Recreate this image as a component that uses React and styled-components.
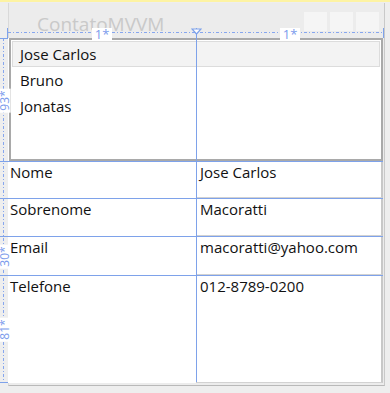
import React from 'react'
import styled, { createGlobalStyle } from 'styled-components'

const GlobalStyle = createGlobalStyle`
  html, body {
    margin: 0;
    padding: 0;
    background: #eeeeee;
  }
  body {
    font-family: "Open Sans", "Noto Sans", sans-serif;
    color: #111111;
  }
`

const blue = '#7ea2ea'
const dotColor = '#86a6ee'

const Surface = styled.div`
  position: relative;
  width: 390px;
  height: 393px;
  overflow: hidden;
  background: #eeeeee;
`

const TopStrip = styled.div`
  height: 2px;
  background: #fdf3a3;
`

const Frame = styled.div`
  margin: 1px 0 0 8px;
  width: 377px;
  height: 383px;
  background: #ececec;
  border-right: 1px solid #c9c9c9;
  border-bottom: 1px solid #b9b9b9;
  border-left: 1px solid #d9d9d9;
  box-sizing: border-box;
  display: flex;
  flex-direction: column;
`

const TitleBar = styled.div`
  height: 35px;
  flex: none;
  display: flex;
  align-items: flex-start;
  padding: 0 5px 0 28px;
`

const Title = styled.div`
  margin-top: 8px;
  font-size: 19px;
  line-height: 26px;
  color: #c9c9c9;
`

const Controls = styled.div`
  margin-left: auto;
  margin-top: 9px;
  display: flex;
  gap: 3px;
`

const CtrlBox = styled.div`
  width: 23px;
  height: 19px;
  background: #f5f5f5;
`

const Client = styled.div`
  width: 375px;
  height: 345px;
  margin-left: -1px;
  background: #ffffff;
  display: grid;
  grid-template-columns: 188px 1fr;
  grid-template-rows: 123px 37px 38px 39px 1fr;
`

const ListBox = styled.div`
  grid-column: 1 / 3;
  margin-left: 1px;
  border: 2px solid #a9a9a9;
  padding: 1px;
  background: #ffffff;
`

const ListItem = styled.div`
  height: 26px;
  box-sizing: border-box;
  padding: 2px 7px;
  font-size: 15px;
  line-height: 20px;
  background: ${p => (p.$selected ? '#f3f3f3' : 'transparent')};
  border: 1px solid ${p => (p.$selected ? '#dcdcdc' : 'transparent')};
`

const FieldLabel = styled.div`
  padding: 1px 2px 0;
  font-size: 15px;
  line-height: 20px;
`

const TextBox = styled.div`
  border: 1px solid #c4c4c4;
  border-right: 2px solid #c8c8c8;
  border-bottom-color: #d2d2d2;
  padding: 0 3px;
  font-size: 15px;
  line-height: 20px;
`

/* designer adorners drawn over the window */
const ColumnRuler = styled.div`
  position: absolute;
  left: 7px;
  top: 28px;
  width: 377px;
  height: 10px;
  box-sizing: border-box;
  display: grid;
  grid-template-columns: 188px 1fr;
  border-left: 1px solid ${blue};
  border-right: 1px solid ${blue};

  &::before {
    content: '';
    position: absolute;
    left: 0;
    right: 0;
    top: 4px;
    height: 1px;
    background: repeating-linear-gradient(90deg, ${dotColor} 0 3px, transparent 3px 5px, ${dotColor} 5px 6px, transparent 6px 8px);
  }
`

const RulerCell = styled.div`
  position: relative;
  display: flex;
  justify-content: center;
  align-items: center;
  border-left: ${p => (p.$split ? `1px solid ${blue}` : 'none')};
`

const StarTag = styled.div`
  position: relative;
  background: #ffffff;
  color: #7b9bec;
  font-size: ${p => (p.$vertical ? '12px' : '13px')};
  line-height: 13px;
  padding: ${p => (p.$vertical ? '0 2px' : '0 3px')};
  white-space: nowrap;
  transform: ${p => (p.$vertical ? 'rotate(-90deg)' : 'none')};
`

const Marker = styled.svg`
  position: absolute;
  left: -6px;
  top: 0;
`

const RowOverlay = styled.div`
  position: absolute;
  left: 0;
  top: 38px;
  width: 383px;
  height: 344px;
  display: grid;
  grid-template-columns: 8px 188px 1fr;
  grid-template-rows: 123px 37px 38px 39px 1fr;
  border-top: 1px solid transparent;
  box-sizing: border-box;
  pointer-events: none;

  &::before {
    content: '';
    position: absolute;
    left: 0;
    top: -1px;
    width: 8px;
    height: 1px;
    background: ${blue};
  }
  &::after {
    content: '';
    position: absolute;
    left: 0;
    bottom: -1px;
    width: 8px;
    height: 1px;
    background: ${blue};
  }
`

const RowRulerTrack = styled.div`
  grid-column: 1;
  grid-row: 1 / -1;
  margin: -1px 0 0 3px;
  width: 1px;
  background: repeating-linear-gradient(180deg, ${dotColor} 0 3px, transparent 3px 5px, ${dotColor} 5px 6px, transparent 6px 8px);
`

const RowBand = styled.div`
  grid-column: 1 / -1;
  grid-row: ${p => p.$row};
  border-top: ${p => (p.$first ? 'none' : `1px solid ${blue}`)};
  margin-top: -1px;
`

const RowTagCell = styled.div`
  grid-column: 1;
  grid-row: ${p => p.$row};
  display: flex;
  justify-content: center;
  align-items: center;
  margin-left: 1px;
`

const ColumnLine = styled.div`
  grid-column: 3;
  grid-row: 1 / -1;
  margin-top: -1px;
  border-left: 1px solid ${blue};
`

const items = ['Jose Carlos', 'Bruno', 'Jonatas']

const fields = [
  { label: 'Nome', value: 'Jose Carlos' },
  { label: 'Sobrenome', value: 'Macoratti' },
  { label: 'Email', value: 'macoratti@yahoo.com' },
  { label: 'Telefone', value: '012-8789-0200' },
]

const rowStars = { 1: '93*', 4: '30*', 5: '81*' }

const App = () => {
  return (
    <Surface>
      <GlobalStyle />
      <TopStrip />
      <Frame>
        <TitleBar>
          <Title>ContatoMVVM</Title>
          <Controls>
            <CtrlBox />
            <CtrlBox />
            <CtrlBox />
          </Controls>
        </TitleBar>
        <Client>
          <ListBox>
            {items.map((it, i) => (
              <ListItem key={it} $selected={i === 0}>{it}</ListItem>
            ))}
          </ListBox>
          {fields.map(f => (
            <React.Fragment key={f.label}>
              <FieldLabel>{f.label}</FieldLabel>
              <TextBox>{f.value}</TextBox>
            </React.Fragment>
          ))}
        </Client>
      </Frame>

      <ColumnRuler>
        <RulerCell>
          <StarTag>1*</StarTag>
        </RulerCell>
        <RulerCell $split>
          <Marker width="11" height="7" viewBox="0 0 11 7">
            <path d="M1 1 H10 L5.5 6 Z" fill="#ffffff" stroke={blue} strokeWidth="1.2" />
          </Marker>
          <StarTag>1*</StarTag>
        </RulerCell>
      </ColumnRuler>

      <RowOverlay>
        {[1, 2, 3, 4, 5].map(r => (
          <RowBand key={r} $row={r} $first={r === 1} />
        ))}
        <RowRulerTrack />
        <ColumnLine />
        {Object.entries(rowStars).map(([r, text]) => (
          <RowTagCell key={r} $row={r}>
            <StarTag $vertical>{text}</StarTag>
          </RowTagCell>
        ))}
      </RowOverlay>
    </Surface>
  )
}

export default App
